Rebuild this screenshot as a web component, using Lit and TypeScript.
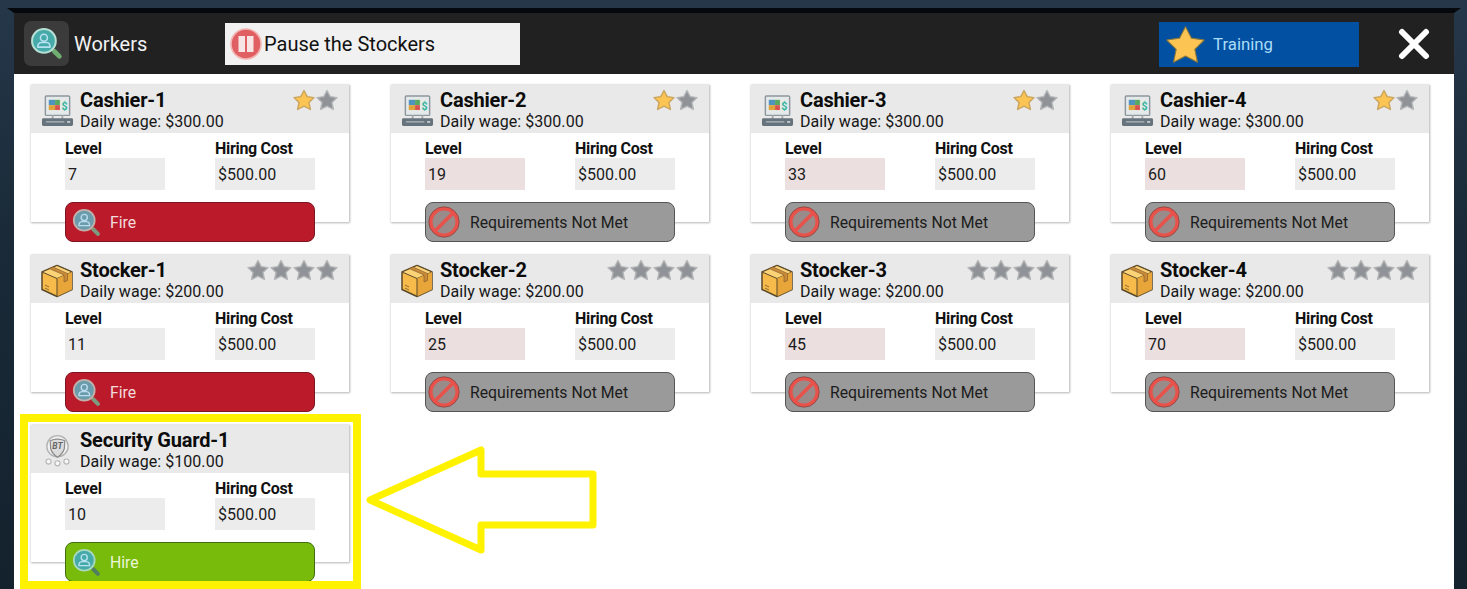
import { LitElement, html, css } from "lit";
import { customElement } from "lit/decorators.js";

const starPath = "M11 1.5 L14.2 7.6 L21 8.6 L16 13.6 L17.4 20.5 L11 17.2 L4.6 20.5 L6 13.6 L1 8.6 L7.8 7.6 Z";

const star = (on: boolean) => html`<svg class="star" viewBox="0 0 22 22">
  <path d=${starPath} fill=${on ? "#fcc453" : "#8f9296"} stroke=${on ? "#c9a45e" : "#b4b6b8"} stroke-width="1.4" stroke-linejoin="round"></path>
</svg>`;

const finder = (fill: string, ring: string, handle: string, person: string, size: number) => html`<svg
  viewBox="0 0 32 32" width=${size} height=${size}>
  <path d="M20 20 L29 29" stroke=${ring} stroke-width="2.5" stroke-linecap="round"></path>
  <path d="M23.5 23.5 L28.5 28.5" stroke=${handle} stroke-width="4.5" stroke-linecap="round"></path>
  <circle cx="13.5" cy="13.5" r="11.5" fill=${fill} stroke=${ring} stroke-width="2"></circle>
  <circle cx="13.5" cy="10.5" r="3.4" fill="none" stroke=${person} stroke-width="1.5"></circle>
  <path d="M7.5 19.5 Q7.5 15.2 11 15 L16 15 Q19.5 15.2 19.5 19.5 Z" fill="none" stroke=${person} stroke-width="1.5" stroke-linejoin="round"></path>
</svg>`;

const blocked = html`<svg viewBox="0 0 32 32" width="32" height="32">
  <circle cx="16" cy="16" r="13.2" fill="#9a8b8b" stroke="#e8524a" stroke-width="3.6"></circle>
  <circle cx="16" cy="16" r="15.2" fill="none" stroke="#8c3a36" stroke-width="0.8"></circle>
  <path d="M7 25 L25 7" stroke="#e8524a" stroke-width="3.6"></path>
</svg>`;

const registerIcon = html`<svg viewBox="0 0 34 34" width="33" height="33">
  <rect x="4.5" y="2" width="25" height="20" rx="1" fill="#e6e9ea" stroke="#8d979e" stroke-width="1.5"></rect>
  <rect x="8" y="6" width="6.5" height="5.5" fill="#4d93bd"></rect>
  <rect x="8" y="11.5" width="6.5" height="5" fill="#e0a33a"></rect>
  <rect x="14.5" y="6" width="5" height="5.5" fill="#5aa85e"></rect>
  <rect x="14.5" y="11.5" width="5" height="5" fill="#d9534f"></rect>
  <text x="21" y="16.5" font-family="Roboto, sans-serif" font-size="11" font-weight="700" fill="#2fb59a">$</text>
  <rect x="11" y="22" width="2" height="4" fill="#a5adb2"></rect>
  <rect x="21" y="22" width="2" height="4" fill="#a5adb2"></rect>
  <rect x="1" y="25" width="32" height="8" rx="1.5" fill="#67737c"></rect>
  <rect x="5" y="28" width="19" height="1.4" fill="#a9b2b8"></rect>
  <rect x="27" y="28" width="3" height="1.6" fill="#d8dde0"></rect>
</svg>`;

const boxIcon = html`<svg viewBox="0 0 34 34" width="34" height="34">
  <path d="M17 1.5 L32 8 L32 25.5 L17 32.5 L2 25.5 L2 8 Z" fill="#f7bb4c" stroke="#5a4a2a" stroke-width="1.5" stroke-linejoin="round"></path>
  <path d="M2 8 L17 14.5 L32 8 L17 1.5 Z" fill="#fcd277" stroke="#5a4a2a" stroke-width="1" stroke-linejoin="round"></path>
  <path d="M17 14.5 L32 8 L32 25.5 L17 32.5 Z" fill="#e8a63a"></path>
  <path d="M17 14.5 L17 32.5" stroke="#5a4a2a" stroke-width="1"></path>
  <path d="M9 4.5 L24 11 L24 18 L27.5 16.5 L27.5 9.5 L13 3 Z" fill="#c98a3a" stroke="#7a5a2a" stroke-width="0.6"></path>
  <path d="M5 21 L9 23 M5 24 L9 26" stroke="#8a6a2a" stroke-width="1"></path>
</svg>`;

const guardIcon = html`<svg viewBox="0 0 34 38" width="29" height="33">
  <circle cx="17" cy="14" r="12.5" fill="#f0f0f0" stroke="#b2b2b2" stroke-width="1.6"></circle>
  <path d="M8.5 7.5 Q17 4 25.5 7.5 L25 17 Q23 23 17 27 Q11 23 9 17 Z" fill="#dcdcdc" stroke="#8a8a8a" stroke-width="1.4"></path>
  <text x="17" y="17.5" text-anchor="middle" font-family="Roboto, sans-serif" font-size="10" font-style="italic" font-weight="700" fill="#666">BT</text>
  <circle cx="6.5" cy="32" r="3" fill="#f7f7f7" stroke="#b5b5b5" stroke-width="1.3"></circle>
  <circle cx="17" cy="34" r="3" fill="#f7f7f7" stroke="#b5b5b5" stroke-width="1.3"></circle>
  <circle cx="27.5" cy="32" r="3" fill="#f7f7f7" stroke="#b5b5b5" stroke-width="1.3"></circle>
</svg>`;

type Kind = "cashier" | "stocker" | "guard";
type Act = "fire" | "hire" | "blocked";
interface Worker {
  name: string; kind: Kind; wage: string; level: number; act: Act; low: boolean; stars: number; lit: number;
}

const W = (name: string, kind: Kind, wage: string, level: number, act: Act, stars: number, lit: number): Worker =>
  ({ name, kind, wage, level, act, low: act === "blocked", stars, lit });

const workers: Worker[] = [
  W("Cashier-1", "cashier", "300", 7, "fire", 2, 1),
  W("Cashier-2", "cashier", "300", 19, "blocked", 2, 1),
  W("Cashier-3", "cashier", "300", 33, "blocked", 2, 1),
  W("Cashier-4", "cashier", "300", 60, "blocked", 2, 1),
  W("Stocker-1", "stocker", "200", 11, "fire", 4, 0),
  W("Stocker-2", "stocker", "200", 25, "blocked", 4, 0),
  W("Stocker-3", "stocker", "200", 45, "blocked", 4, 0),
  W("Stocker-4", "stocker", "200", 70, "blocked", 4, 0),
  W("Security Guard-1", "guard", "100", 10, "hire", 0, 0),
];

const icons = { cashier: registerIcon, stocker: boxIcon, guard: guardIcon };

@customElement("app-root")
export class AppRoot extends LitElement {
  static styles = css`
    :host {
      display: block;
      position: relative;
      height: 589px;
      overflow: hidden;
      font-family: Roboto, "Liberation Sans", sans-serif;
      color: #111;
      background: linear-gradient(180deg, #25384a 0%, #1a2a38 40%, #13222d 100%);
    }
    .shell { display: flex; flex-direction: column; height: 589px; padding: 8px 13px 0 14px; box-sizing: border-box; }
    .lip { flex: none; height: 5px; margin: 0 -7px; background: #05090d; clip-path: polygon(0 0, 100% 0, calc(100% - 7px) 100%, 7px 100%); }
    .bar { display: flex; align-items: center; height: 61px; background: #212121; flex: none; position: relative; }
    .worker-badge { width: 45px; height: 45px; margin-left: 10px; border-radius: 7px; background: #3b3b3b; display: flex; align-items: center; justify-content: center; }
    .bar-title { margin-left: 5px; width: 151px; color: #f2f2f2; font-size: 20px; }
    .pause { display: flex; align-items: center; width: 295px; height: 42px; background: #f1f1f1; font-size: 20px; color: #111; gap: 2px; padding-left: 5px; box-sizing: border-box; }
    .train { display: flex; align-items: center; width: 200px; height: 45px; margin: 1px 0 0 auto; background: #0150a1; color: #a9dcf7; font-size: 16.8px; gap: 7px; padding-left: 6px; box-sizing: border-box; }
    .close { display: flex; margin: 0 24px 0 39px; }
    .body { flex: 1; min-height: 0; background: #fff; padding: 10px 0 0 16px; }
    .grid { display: grid; grid-template-columns: repeat(4, 320px); column-gap: 40px; grid-auto-rows: 170px; }
    .card { margin: 1px 1px 0; height: 137px; box-shadow: 0 0 2px 0.5px #b4b4b4; background: #fff; }
    .head { display: flex; height: 48px; background: #e9e9e9; }
    .ico { width: 49px; display: flex; justify-content: center; align-items: center; padding: 3px 0 0 3px; box-sizing: border-box; }
    .names { flex: 1; }
    .name { font-size: 20px; font-weight: 700; letter-spacing: -0.2px; line-height: 22px; margin-top: 4px; color: #0c0c0c; }
    .wage { font-size: 16px; letter-spacing: 0.05px; line-height: 20px; margin-top: 1px; color: #161616; }
    .stars { display: flex; padding: 4px 11px 0 0; gap: 1px; }
    .star { width: 22px; height: 22px; display: block; }
    .fields { display: flex; gap: 50px; padding: 6px 0 0 34px; }
    .field { width: 100px; }
    .lbl { font-size: 16px; font-weight: 700; letter-spacing: -0.3px; line-height: 19px; }
    .val { height: 32px; background: #ececec; font-size: 16px; line-height: 33px; padding-left: 3px; color: #1a1a1a; }
    .val.low { background: #ebdfdf; }
    .btn { display: flex; align-items: center; width: 250px; height: 40px; margin: 12px 0 0 34px; box-sizing: border-box; border-radius: 8px; border: 1px solid #444; font-size: 15.8px; position: relative; }
    .bi { width: 44px; display: flex; flex: none; padding-left: 6px; box-sizing: border-box; }
    .blocked .bi { padding-left: 2px; }
    .fire { background: #bb1a2a; border-color: #7c1520; color: #f0dcdc; }
    .hire { background: #78bb0a; border-color: #3f6d10; color: #ecf6d8; }
    .blocked { background: #9a9a9a; border-color: #555; color: #1c1c1c; }
    .mark { position: absolute; left: 20px; top: 414px; width: 341px; height: 175px; border: 8px solid #fff200; box-sizing: border-box; pointer-events: none; }
    .arrow { position: absolute; left: 360px; top: 440px; }
  `;

  private card(w: Worker) {
    const look = w.act === "fire"
      ? finder("#6b9cab", "#c2b0ab", "#7d9a7e", "#bcdcef", 29)
      : finder("#46aaa8", "#a8d8c0", "#4f7f5f", "#b8e2f4", 29);
    return html`<div>
      <div class="card">
        <div class="head">
          <div class="ico">${icons[w.kind]}</div>
          <div class="names">
            <div class="name">${w.name}</div>
            <div class="wage">Daily wage: $${w.wage}.00</div>
          </div>
          <div class="stars">${Array.from({ length: w.stars }, (_, i) => star(i < w.lit))}</div>
        </div>
        <div class="fields">
          <div class="field"><div class="lbl">Level</div><div class="val ${w.low ? "low" : ""}">${w.level}</div></div>
          <div class="field"><div class="lbl">Hiring Cost</div><div class="val">$500.00</div></div>
        </div>
        <div class="btn ${w.act}">
          <div class="bi">${w.act === "blocked" ? blocked : look}</div>
          ${w.act === "fire" ? "Fire" : w.act === "hire" ? "Hire" : "Requirements Not Met"}
        </div>
      </div>
    </div>`;
  }

  render() {
    return html`
      <div class="shell">
        <div class="lip"></div>
        <div class="bar">
          <div class="worker-badge">${finder("#46aaa8", "#b6e0d4", "#6fae70", "#b8e2f4", 33)}</div>
          <div class="bar-title">Workers</div>
          <div class="pause">
            <svg viewBox="0 0 32 32" width="32" height="32">
              <circle cx="16" cy="16" r="15" fill="#e05f62" stroke="#f3b4b2" stroke-width="1.6"></circle>
              <rect x="8.5" y="8" width="6.5" height="16" fill="#f7e4e4"></rect>
              <rect x="17" y="8" width="6.5" height="16" fill="#f7e4e4"></rect>
            </svg>
            Pause the Stockers
          </div>
          <div class="train">
            <svg viewBox="0 0 22 22" width="41" height="41">
              <path d=${starPath} fill="#fcc453" stroke="#8f7a3a" stroke-width="0.6" stroke-linejoin="round"></path>
            </svg>
            Training
          </div>
          <div class="close">
            <svg viewBox="0 0 32 32" width="32" height="32">
              <path d="M4 4 L28 28 M28 4 L4 28" stroke="#fff" stroke-width="6" stroke-linecap="round"></path>
            </svg>
          </div>
        </div>
        <div class="body"><div class="grid">${workers.map((w) => this.card(w))}</div></div>
      </div>
      <div class="mark"></div>
      <svg class="arrow" width="240" height="120" viewBox="360 440 240 120">
        <path d="M370 500 L481 450 L481 474 L593 474 L593 525 L481 525 L481 550 Z" fill="none" stroke="#fff200" stroke-width="7" stroke-linejoin="round"></path>
      </svg>
    `;
  }
}
